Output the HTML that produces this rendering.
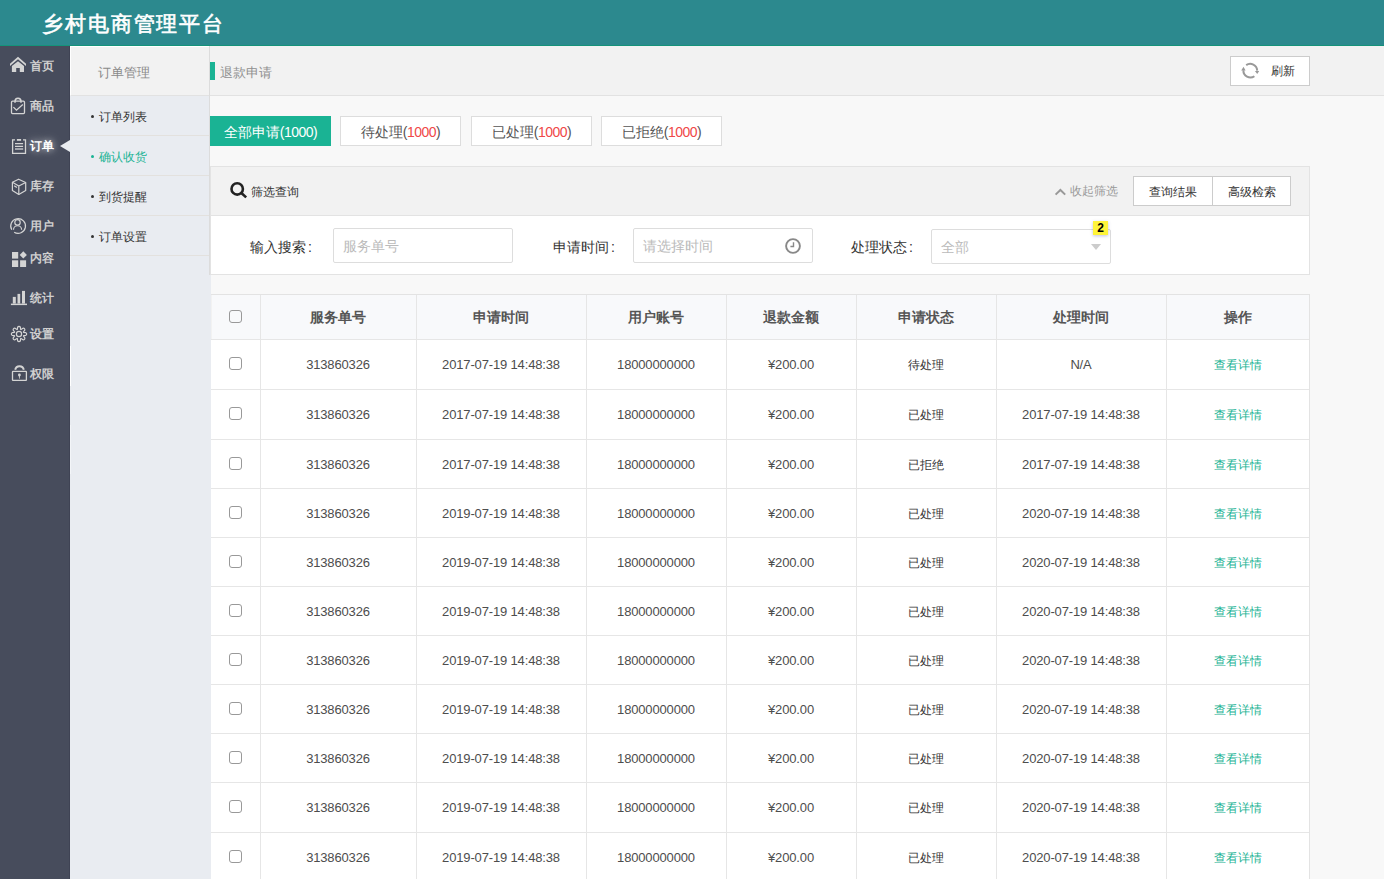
<!DOCTYPE html><html><head><meta charset="utf-8"><style>
*{box-sizing:border-box;margin:0;padding:0}
html,body{width:1384px;height:879px;overflow:hidden}
body{position:relative;background:#f8f8f8;font-family:"Liberation Sans",sans-serif;color:#333;font-size:13px}
.a{position:absolute;white-space:nowrap}
#hdr{left:0;top:0;width:1384px;height:46px;background:#2c898e;border-bottom:1px solid #14937a}
#title{left:42px;top:10px;font-size:21px;font-weight:normal;-webkit-text-stroke:0.6px #fff;color:#fff;letter-spacing:1.9px;line-height:28px}
#side{left:0;top:46px;width:70px;height:833px;background:#474c5c;border-right:1px solid #3f4354}
.si{left:0;width:69px;height:20px;color:#cfcfcf;font-size:12px;line-height:21px;font-weight:bold}
.si svg{position:absolute;left:6px;width:24px;height:24px}
.si span{position:absolute;left:30px;top:0}
.si.on span{color:#fff;font-weight:bold;text-shadow:0 0 6px rgba(255,255,255,.55),0 0 12px rgba(255,255,255,.35)}
#tri{left:60px;top:140px;width:0;height:0;border-top:6px solid transparent;border-bottom:6px solid transparent;border-right:10px solid #e9ecf1}
#sub{left:70px;top:46px;width:140px;height:833px;background:#e9ecf1;border-right:1px solid #dcdcdc}
#subt{left:0;top:0;width:139px;height:50px;background:#f2f2f2;border-left:1px solid #fff;border-top:1px solid #fff;border-bottom:1px solid #e2e2e2;color:#8a8a8a;font-size:13px;line-height:51px;padding-left:27px}
.sr{left:0;width:139px;height:40px;border-bottom:1px solid #e3e1de;font-size:12px;line-height:42px;color:#333;padding-left:29px}
.sr:before{content:"";position:absolute;left:21px;top:19px;width:3px;height:3px;border-radius:50%;background:#333}
.sr.on{color:#1ab394}
.sr.on:before{background:#1ab394}
#mh{left:210px;top:46px;width:1174px;height:50px;background:#f2f2f2;border-bottom:1px solid #e2e2e2}
#gbar{left:0;top:16px;width:5px;height:18px;background:#1ab394}
#mtitle{left:10px;top:18px;font-size:13px;line-height:18px;color:#8f8f8f}
#refresh{left:1020px;top:10px;width:80px;height:30px;background:#fff;border:1px solid #ccc}
#refresh svg{position:absolute;left:7px;top:1px}
#refresh span{position:absolute;left:40px;top:6px;font-size:12px;line-height:16px;color:#333}
.tab{top:116px;height:30px;width:121px;background:#fff;border:1px solid #ddd;font-size:14px;line-height:30px;text-align:center;color:#555}
.tab i{font-style:normal;color:#f04848}
.tab u{text-decoration:none;letter-spacing:-0.5px}
.tab.on{background:#1ab394;border-color:#1ab394;color:#fff}
#fp{left:210px;top:166px;width:1100px;height:109px;background:#fff;border:1px solid #e3e3e3}
#fph{left:0;top:0;width:1098px;height:49px;background:#f2f2f2;border-bottom:1px solid #e3e3e3}
.lbl{font-size:14px;line-height:18px;color:#333}
.inp{background:#fff;border:1px solid #ddd;border-radius:2px;height:35px;width:180px}
.inp span{position:absolute;left:9px;top:8px;font-size:14px;line-height:18px;color:#bbb}
.btn{top:9px;height:30px;background:#fff;border:1px solid #ccc;font-size:12px;line-height:30px;text-align:center;color:#333}
#tbl{left:211px;top:294px;width:1099px;height:600px;background:#fff;border-top:1px solid #e3e3e3;border-right:1px solid #e3e3e3}
#thead{left:0;top:0;width:1098px;height:44px;background:#f8f9fb}
.hl{height:1px;background:#e6e6e6;left:0;width:1098px}
.vl{width:1px;background:#e6e6e6;top:0;height:600px}
.th{font-size:14px;font-weight:bold;color:#555;line-height:18px;text-align:center}
.td{font-size:13px;color:#4d4d4d;line-height:18px;text-align:center;letter-spacing:-0.15px}
.td.c{font-size:12px;letter-spacing:0;color:#363636}
.td.g{color:#1ab394;font-size:12px;letter-spacing:0}
.cb{width:13px;height:13px;border:1px solid #999;border-radius:3px}
</style></head><body>
<div id="hdr" class="a"><div id="title" class="a">乡村电商管理平台</div></div>
<div id="side" class="a">
<div class="si a" style="top:9.8px"><svg viewBox="0 0 24 24" style="top:-4px"><polygon fill="#d4d4d4" points="4,11.8 12,4.8 20,11.8 20,14 12,7.3 4,14"/><polygon fill="#d4d4d4" points="5.9,13.9 12,9.3 18,13.9 18,20.1 13.8,20.1 13.8,16.1 10.2,16.1 10.2,20.1 5.9,20.1"/></svg><span>首页</span></div>
<div class="si a" style="top:50.0px"><svg viewBox="0 0 24 24" style="top:-2px" fill="none" stroke="#d4d4d4" stroke-width="1.3"><rect x="5.5" y="7.2" width="13" height="12.4" rx="1"/><path d="M9,8.7 V7.6 A3,3.3 0 0 1 15,7.6 V8.7" stroke-width="1.5"/><path d="M7.4,13.1 L10.5,16.2 L16.8,10.4"/></svg><span>商品</span></div>
<div class="si a on" style="top:89.9px"><svg viewBox="0 0 24 24" style="top:-2px" fill="none" stroke="#d4d4d4" stroke-width="1.3"><path d="M9,5.8 H6.6 V19.4 H19.5 V5.8 H17"/><rect x="10.9" y="5" width="4.2" height="1.8" fill="#d4d4d4" stroke="none"/><path d="M9,9.6 H17.1 M9,12.4 H17.1 M9,15 H17.1"/><path d="M9,15 H17.1" stroke="#a0a3ad" stroke-width="1.6"/></svg><span>订单</span></div>
<div class="si a" style="top:130.3px"><svg viewBox="0 0 24 24" style="top:-2px" fill="none" stroke="#d4d4d4" stroke-width="1.2" stroke-linejoin="round"><path d="M12.6,5.2 L19.7,8.5 V16.4 L12.8,20.5 L6.4,16.4 V8.3 Z"/><path d="M6.4,8.3 L12.8,12 L19.7,8.5 M12.8,12 V20.5"/><path d="M8.2,11.7 L10.9,13.4"/></svg><span>库存</span></div>
<div class="si a" style="top:170.1px"><svg viewBox="0 0 24 24" style="top:-2px" fill="none" stroke="#d4d4d4" stroke-width="1.2"><path d="M5.76,15.81 A7.4,7.4 0 1 1 8.18,18.28"/><circle cx="11.5" cy="8.4" r="2.7"/><path d="M7.5,15.8 A4.05,4.05 0 0 1 15.6,15.8"/></svg><span>用户</span></div>
<div class="si a" style="top:202.3px"><svg viewBox="0 0 24 24" style="top:-2px" fill="#d4d4d4"><rect x="6" y="6" width="6.2" height="6.6"/><rect x="6" y="14.3" width="6.2" height="6.7"/><rect x="14.1" y="14.3" width="6" height="6.7"/><polygon points="17.3,5.3 20.9,8.9 17.3,12.5 13.7,8.9"/></svg><span>内容</span></div>
<div class="si a" style="top:242.1px"><svg viewBox="0 0 24 24" style="top:-2px" fill="#d4d4d4"><rect x="4.9" y="17.6" width="16.1" height="1.5"/><rect x="6.8" y="10.9" width="3" height="6.7"/><rect x="11.5" y="7.9" width="2.7" height="9.7"/><rect x="16" y="4.9" width="3" height="12.7"/></svg><span>统计</span></div>
<div class="si a" style="top:278.3px"><svg viewBox="0 0 24 24" style="top:-2px" fill="none" stroke="#d4d4d4" stroke-width="1.2" stroke-linejoin="round"><path d="M11.31,7.51 L11.68,5.13 A1.5,1.5 0 0 1 14.32,5.13 L14.69,7.51 A1.2,1.2 0 0 0 14.98,7.63 L16.93,6.20 A1.5,1.5 0 0 1 18.80,8.07 L17.37,10.02 A1.2,1.2 0 0 0 17.49,10.31 L19.87,10.68 A1.5,1.5 0 0 1 19.87,13.32 L17.49,13.69 A1.2,1.2 0 0 0 17.37,13.98 L18.80,15.93 A1.5,1.5 0 0 1 16.93,17.80 L14.98,16.37 A1.2,1.2 0 0 0 14.69,16.49 L14.32,18.87 A1.5,1.5 0 0 1 11.68,18.87 L11.31,16.49 A1.2,1.2 0 0 0 11.02,16.37 L9.07,17.80 A1.5,1.5 0 0 1 7.20,15.93 L8.63,13.98 A1.2,1.2 0 0 0 8.51,13.69 L6.13,13.32 A1.5,1.5 0 0 1 6.13,10.68 L8.51,10.31 A1.2,1.2 0 0 0 8.63,10.02 L7.20,8.07 A1.5,1.5 0 0 1 9.07,6.20 L11.02,7.63 A1.2,1.2 0 0 0 11.31,7.51 Z"/><circle cx="13" cy="12" r="2.6"/></svg><span>设置</span></div>
<div class="si a" style="top:318.4px"><svg viewBox="0 0 24 24" style="top:-3px" fill="none" stroke="#d4d4d4" stroke-width="1.3"><rect x="6.5" y="10.4" width="13.9" height="9" rx="0.5"/><path d="M9.2,8.8 A4.4,4.4 0 0 1 17.8,8.8" stroke-width="2"/><circle cx="13.4" cy="14" r="1.4" fill="#d4d4d4" stroke="none"/><path d="M12.8,14.5 L14,14.5 L13.7,17.8 L13.1,17.8 Z" fill="#d4d4d4" stroke="none"/></svg><span>权限</span></div>
</div>
<div id="sub" class="a"><div id="subt" class="a">订单管理</div><div class="sr a" style="top:50px">订单列表</div><div class="sr a on" style="top:90px">确认收货</div><div class="sr a" style="top:130px">到货提醒</div><div class="sr a" style="top:170px">订单设置</div></div>
<div id="tri" class="a"></div>
<div id="mh" class="a"><div id="gbar" class="a"></div><div id="mtitle" class="a">退款申请</div><div id="refresh" class="a"><svg width="24" height="24" viewBox="0 0 24 24" fill="none" stroke="#999" stroke-width="2"><path d="M8.2,7.1 A7,7 0 0 1 19.2,12.6"/><path d="M16.4,18.2 A7,7 0 0 1 5.4,12.2"/><polygon points="16.9,13 21.2,13 19.2,16" fill="#999" stroke="none"/><polygon points="3.2,12.5 7.6,12.5 5.5,8.8" fill="#999" stroke="none"/></svg><span>刷新</span></div></div>
<div class="tab a on" style="left:210px">全部申请<u>(1000)</u></div>
<div class="tab a" style="left:340px">待处理<u>(<i>1000</i>)</u></div>
<div class="tab a" style="left:471px">已处理<u>(<i>1000</i>)</u></div>
<div class="tab a" style="left:601px">已拒绝<u>(<i>1000</i>)</u></div>
<div id="fp" class="a"><div id="fph" class="a"><svg class="a" style="left:15px;top:11px" width="24" height="24" viewBox="0 0 24 24" fill="none" stroke="#222" stroke-width="2.6"><circle cx="11.2" cy="10.9" r="5.7"/><path d="M15.6,15.2 L20.2,19.4"/></svg><div class="a" style="left:40px;top:17px;font-size:12px;line-height:16px;color:#333">筛选查询</div><svg class="a" style="left:839px;top:13px" width="24" height="24" viewBox="0 0 24 24" fill="none" stroke="#999" stroke-width="2"><path d="M5.6,14.6 L10.4,10 L15.2,14.6"/></svg><div class="a" style="left:859px;top:16px;font-size:12px;line-height:16px;color:#999">收起筛选</div><div class="btn a" style="left:922px;width:80px">查询结果</div><div class="btn a" style="left:1001px;width:79px">高级检索</div></div>
<div class="lbl a" style="left:39px;top:71px">输入搜索<b style="font-weight:normal;margin-left:2px">:</b></div>
<div class="inp a" style="left:122px;top:61px"><span>服务单号</span></div>
<div class="lbl a" style="left:342px;top:71px">申请时间<b style="font-weight:normal;margin-left:2px">:</b></div>
<div class="inp a" style="left:422px;top:61px"><span>请选择时间</span><svg class="a" style="left:146px;top:5px" width="24" height="24" viewBox="0 0 24 24" fill="none" stroke="#888" stroke-width="1.9"><circle cx="13" cy="12" r="6.9"/><path d="M13.5,8.2 V12.5 H10.4" stroke-width="1.4"/></svg></div>
<div class="lbl a" style="left:640px;top:71px">处理状态<b style="font-weight:normal;margin-left:2px">:</b></div>
<div class="inp a" style="left:720px;top:62px;height:35px"><span>全部</span><div class="a" style="left:159px;top:14px;width:0;height:0;border-left:5.5px solid transparent;border-right:5.5px solid transparent;border-top:6px solid #ccc"></div></div>
<div class="a" style="left:882px;top:54px;width:15px;height:14px;background:#fff43a;box-shadow:0 1px 3px rgba(80,80,160,.35);font-size:12px;font-weight:bold;line-height:14px;text-align:center;color:#000">2</div>
</div>
<div id="tbl" class="a"><div id="thead" class="a"></div>
<div class="hl a" style="top:44px"></div>
<div class="hl a" style="top:94px"></div>
<div class="hl a" style="top:144px"></div>
<div class="hl a" style="top:193px"></div>
<div class="hl a" style="top:242px"></div>
<div class="hl a" style="top:291px"></div>
<div class="hl a" style="top:340px"></div>
<div class="hl a" style="top:389px"></div>
<div class="hl a" style="top:438px"></div>
<div class="hl a" style="top:487px"></div>
<div class="hl a" style="top:537px"></div>
<div class="hl a" style="top:587px"></div>
<div class="vl a" style="left:49px"></div>
<div class="vl a" style="left:205px"></div>
<div class="vl a" style="left:375px"></div>
<div class="vl a" style="left:515px"></div>
<div class="vl a" style="left:645px"></div>
<div class="vl a" style="left:785px"></div>
<div class="vl a" style="left:955px"></div>
<div class="cb a" style="left:18px;top:15px"></div>
<div class="th a" style="left:49px;width:156px;top:13.0px">服务单号</div>
<div class="th a" style="left:205px;width:170px;top:13.0px">申请时间</div>
<div class="th a" style="left:375px;width:140px;top:13.0px">用户账号</div>
<div class="th a" style="left:515px;width:130px;top:13.0px">退款金额</div>
<div class="th a" style="left:645px;width:140px;top:13.0px">申请状态</div>
<div class="th a" style="left:785px;width:170px;top:13.0px">处理时间</div>
<div class="th a" style="left:955px;width:143px;top:13.0px">操作</div>
<div class="cb a" style="left:18px;top:62px"></div>
<div class="td a" style="left:49px;width:156px;top:61.0px">313860326</div>
<div class="td a" style="left:205px;width:170px;top:61.0px">2017-07-19 14:48:38</div>
<div class="td a" style="left:375px;width:140px;top:61.0px">18000000000</div>
<div class="td a" style="left:515px;width:130px;top:61.0px">¥200.00</div>
<div class="td c a" style="left:645px;width:140px;top:61.0px">待处理</div>
<div class="td a" style="left:785px;width:170px;top:61.0px">N/A</div>
<div class="td g a" style="left:955px;width:143px;top:61.0px">查看详情</div>
<div class="cb a" style="left:18px;top:112px"></div>
<div class="td a" style="left:49px;width:156px;top:111.0px">313860326</div>
<div class="td a" style="left:205px;width:170px;top:111.0px">2017-07-19 14:48:38</div>
<div class="td a" style="left:375px;width:140px;top:111.0px">18000000000</div>
<div class="td a" style="left:515px;width:130px;top:111.0px">¥200.00</div>
<div class="td c a" style="left:645px;width:140px;top:111.0px">已处理</div>
<div class="td a" style="left:785px;width:170px;top:111.0px">2017-07-19 14:48:38</div>
<div class="td g a" style="left:955px;width:143px;top:111.0px">查看详情</div>
<div class="cb a" style="left:18px;top:162px"></div>
<div class="td a" style="left:49px;width:156px;top:160.5px">313860326</div>
<div class="td a" style="left:205px;width:170px;top:160.5px">2017-07-19 14:48:38</div>
<div class="td a" style="left:375px;width:140px;top:160.5px">18000000000</div>
<div class="td a" style="left:515px;width:130px;top:160.5px">¥200.00</div>
<div class="td c a" style="left:645px;width:140px;top:160.5px">已拒绝</div>
<div class="td a" style="left:785px;width:170px;top:160.5px">2017-07-19 14:48:38</div>
<div class="td g a" style="left:955px;width:143px;top:160.5px">查看详情</div>
<div class="cb a" style="left:18px;top:211px"></div>
<div class="td a" style="left:49px;width:156px;top:209.5px">313860326</div>
<div class="td a" style="left:205px;width:170px;top:209.5px">2019-07-19 14:48:38</div>
<div class="td a" style="left:375px;width:140px;top:209.5px">18000000000</div>
<div class="td a" style="left:515px;width:130px;top:209.5px">¥200.00</div>
<div class="td c a" style="left:645px;width:140px;top:209.5px">已处理</div>
<div class="td a" style="left:785px;width:170px;top:209.5px">2020-07-19 14:48:38</div>
<div class="td g a" style="left:955px;width:143px;top:209.5px">查看详情</div>
<div class="cb a" style="left:18px;top:260px"></div>
<div class="td a" style="left:49px;width:156px;top:258.5px">313860326</div>
<div class="td a" style="left:205px;width:170px;top:258.5px">2019-07-19 14:48:38</div>
<div class="td a" style="left:375px;width:140px;top:258.5px">18000000000</div>
<div class="td a" style="left:515px;width:130px;top:258.5px">¥200.00</div>
<div class="td c a" style="left:645px;width:140px;top:258.5px">已处理</div>
<div class="td a" style="left:785px;width:170px;top:258.5px">2020-07-19 14:48:38</div>
<div class="td g a" style="left:955px;width:143px;top:258.5px">查看详情</div>
<div class="cb a" style="left:18px;top:309px"></div>
<div class="td a" style="left:49px;width:156px;top:307.5px">313860326</div>
<div class="td a" style="left:205px;width:170px;top:307.5px">2019-07-19 14:48:38</div>
<div class="td a" style="left:375px;width:140px;top:307.5px">18000000000</div>
<div class="td a" style="left:515px;width:130px;top:307.5px">¥200.00</div>
<div class="td c a" style="left:645px;width:140px;top:307.5px">已处理</div>
<div class="td a" style="left:785px;width:170px;top:307.5px">2020-07-19 14:48:38</div>
<div class="td g a" style="left:955px;width:143px;top:307.5px">查看详情</div>
<div class="cb a" style="left:18px;top:358px"></div>
<div class="td a" style="left:49px;width:156px;top:356.5px">313860326</div>
<div class="td a" style="left:205px;width:170px;top:356.5px">2019-07-19 14:48:38</div>
<div class="td a" style="left:375px;width:140px;top:356.5px">18000000000</div>
<div class="td a" style="left:515px;width:130px;top:356.5px">¥200.00</div>
<div class="td c a" style="left:645px;width:140px;top:356.5px">已处理</div>
<div class="td a" style="left:785px;width:170px;top:356.5px">2020-07-19 14:48:38</div>
<div class="td g a" style="left:955px;width:143px;top:356.5px">查看详情</div>
<div class="cb a" style="left:18px;top:407px"></div>
<div class="td a" style="left:49px;width:156px;top:405.5px">313860326</div>
<div class="td a" style="left:205px;width:170px;top:405.5px">2019-07-19 14:48:38</div>
<div class="td a" style="left:375px;width:140px;top:405.5px">18000000000</div>
<div class="td a" style="left:515px;width:130px;top:405.5px">¥200.00</div>
<div class="td c a" style="left:645px;width:140px;top:405.5px">已处理</div>
<div class="td a" style="left:785px;width:170px;top:405.5px">2020-07-19 14:48:38</div>
<div class="td g a" style="left:955px;width:143px;top:405.5px">查看详情</div>
<div class="cb a" style="left:18px;top:456px"></div>
<div class="td a" style="left:49px;width:156px;top:454.5px">313860326</div>
<div class="td a" style="left:205px;width:170px;top:454.5px">2019-07-19 14:48:38</div>
<div class="td a" style="left:375px;width:140px;top:454.5px">18000000000</div>
<div class="td a" style="left:515px;width:130px;top:454.5px">¥200.00</div>
<div class="td c a" style="left:645px;width:140px;top:454.5px">已处理</div>
<div class="td a" style="left:785px;width:170px;top:454.5px">2020-07-19 14:48:38</div>
<div class="td g a" style="left:955px;width:143px;top:454.5px">查看详情</div>
<div class="cb a" style="left:18px;top:505px"></div>
<div class="td a" style="left:49px;width:156px;top:504.0px">313860326</div>
<div class="td a" style="left:205px;width:170px;top:504.0px">2019-07-19 14:48:38</div>
<div class="td a" style="left:375px;width:140px;top:504.0px">18000000000</div>
<div class="td a" style="left:515px;width:130px;top:504.0px">¥200.00</div>
<div class="td c a" style="left:645px;width:140px;top:504.0px">已处理</div>
<div class="td a" style="left:785px;width:170px;top:504.0px">2020-07-19 14:48:38</div>
<div class="td g a" style="left:955px;width:143px;top:504.0px">查看详情</div>
<div class="cb a" style="left:18px;top:555px"></div>
<div class="td a" style="left:49px;width:156px;top:554.0px">313860326</div>
<div class="td a" style="left:205px;width:170px;top:554.0px">2019-07-19 14:48:38</div>
<div class="td a" style="left:375px;width:140px;top:554.0px">18000000000</div>
<div class="td a" style="left:515px;width:130px;top:554.0px">¥200.00</div>
<div class="td c a" style="left:645px;width:140px;top:554.0px">已处理</div>
<div class="td a" style="left:785px;width:170px;top:554.0px">2020-07-19 14:48:38</div>
<div class="td g a" style="left:955px;width:143px;top:554.0px">查看详情</div>
</div>
<div class="a" style="left:209px;top:275px;width:2px;height:604px;background:#e9ecf1"></div>
<div class="a" style="left:211px;top:295px;width:1px;height:44px;background:#f2f2f2"></div>
<div class="a" style="left:70px;top:346px;width:1px;height:40px;background:#fff"></div><div class="a" style="left:70px;top:256px;width:1px;height:49px;background:#f3f5f8"></div><div class="a" style="left:70px;top:425px;width:1px;height:49px;background:#f3f5f8"></div>
</body></html>
